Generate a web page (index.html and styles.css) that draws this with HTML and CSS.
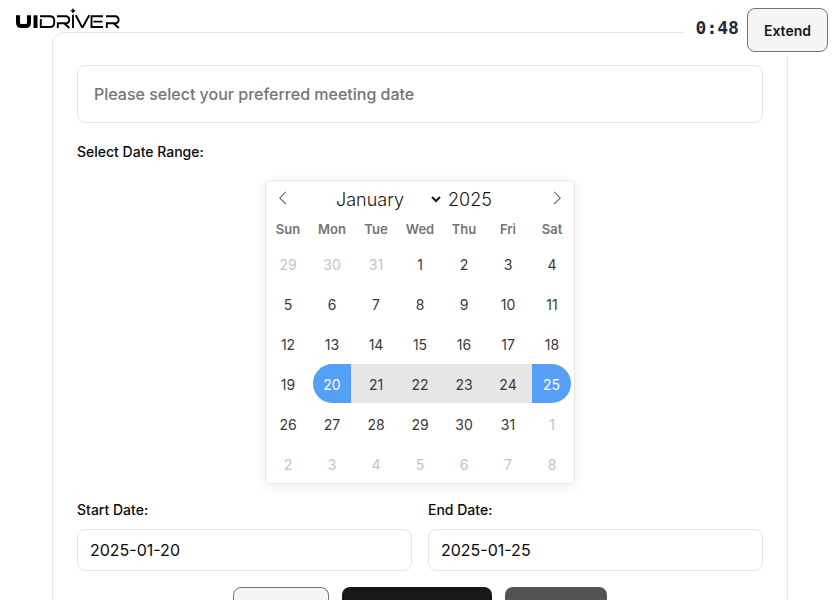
FILE: index.html
```html
<!DOCTYPE html>
<html lang="en">
<head>
  <meta charset="UTF-8">
  <meta name="viewport" content="width=device-width, initial-scale=1.0">
  <title>UI Driver</title>
  <link rel="stylesheet" href="styles.css">
</head>
<body>

  <a class="logo" href="#" aria-label="UI Driver">
    <svg width="104" height="22" viewBox="0 0 104 22" fill="none" stroke="#000" aria-hidden="true">
      <path d="M2 7.300v7.200q0 3.500 3.500 3.500h4q3.500 0 3.500-3.500v-7.200" stroke-width="4"/>
      <path d="M19.500 7.300v12.700" stroke-width="4"/>
      <g stroke-width="1.900">
        <path d="M24.800 11v8h9q4.400 0 4.400-4v-2.600q0-4.200-4.400-4.200h-9.800"/>
        <path d="M41.800 20v-4.800h8q3.400 0 3.400-3.500t-3.400-3.500h-8.800M48.500 15.500l4.800 4.500"/>
        <path d="M57 6.800v13.200"/>
        <path d="M59.800 7.300l6.200 11.700h.8l6.400-11.700"/>
        <path d="M87 8.200h-11.500v10.800h11.500M77.500 13.600h9"/>
        <path d="M90.800 20v-4.800h8.200q3.600 0 3.600-3.500t-3.600-3.500h-9M97.800 15.500l5 4.500"/>
      </g>
      <path d="M57 0l1 1.900 1.900.9-1.900.9-1 1.900-1-1.900-1.900-.9 1.900-.9z" fill="#000" stroke="none"/>
    </svg>
  </a>

  <div class="timer">
    <span class="timer-value">0:48</span>
    <button type="button" class="btn btn-light">Extend</button>
  </div>

  <main class="card">
    <input class="prompt" type="text" placeholder="Please select your preferred meeting date" aria-label="Request">

    <h2 class="label" id="range-label">Select Date Range:</h2>

    <section class="calendar" aria-labelledby="range-label">
      <div class="calendar-header">
        <button type="button" class="nav" aria-label="Previous month">
          <svg width="14" height="14" viewBox="0 0 17 17"><path d="M5.207 8.471l7.146 7.147-0.707 0.707-7.853-7.854 7.854-7.853 0.707 0.707-7.147 7.146z"/></svg>
        </button>
        <div class="current-month">
          <select class="month" aria-label="Month">
            <option selected>January</option>
            <option>February</option>
            <option>March</option>
            <option>April</option>
            <option>May</option>
            <option>June</option>
            <option>July</option>
            <option>August</option>
            <option>September</option>
            <option>October</option>
            <option>November</option>
            <option>December</option>
          </select>
          <input class="year" type="number" value="2025" aria-label="Year">
        </div>
        <button type="button" class="nav" aria-label="Next month">
          <svg width="14" height="14" viewBox="0 0 17 17"><path d="M13.207 8.472l-7.854 7.854-0.707-0.707 7.146-7.146-7.146-7.148 0.707-0.707 7.854 7.854z"/></svg>
        </button>
      </div>
      <table class="days">
        <thead>
          <tr><th>Sun</th><th>Mon</th><th>Tue</th><th>Wed</th><th>Thu</th><th>Fri</th><th>Sat</th></tr>
        </thead>
        <tbody>
          <tr>
            <td><button type="button" class="day other">29</button></td>
            <td><button type="button" class="day other">30</button></td>
            <td><button type="button" class="day other">31</button></td>
            <td><button type="button" class="day">1</button></td>
            <td><button type="button" class="day">2</button></td>
            <td><button type="button" class="day">3</button></td>
            <td><button type="button" class="day">4</button></td>
          </tr>
          <tr>
            <td><button type="button" class="day">5</button></td>
            <td><button type="button" class="day">6</button></td>
            <td><button type="button" class="day">7</button></td>
            <td><button type="button" class="day">8</button></td>
            <td><button type="button" class="day">9</button></td>
            <td><button type="button" class="day">10</button></td>
            <td><button type="button" class="day">11</button></td>
          </tr>
          <tr>
            <td><button type="button" class="day">12</button></td>
            <td><button type="button" class="day">13</button></td>
            <td><button type="button" class="day">14</button></td>
            <td><button type="button" class="day">15</button></td>
            <td><button type="button" class="day">16</button></td>
            <td><button type="button" class="day">17</button></td>
            <td><button type="button" class="day">18</button></td>
          </tr>
          <tr>
            <td><button type="button" class="day">19</button></td>
            <td><button type="button" class="day range-start">20</button></td>
            <td><button type="button" class="day in-range">21</button></td>
            <td><button type="button" class="day in-range">22</button></td>
            <td><button type="button" class="day in-range">23</button></td>
            <td><button type="button" class="day in-range">24</button></td>
            <td><button type="button" class="day range-end">25</button></td>
          </tr>
          <tr>
            <td><button type="button" class="day">26</button></td>
            <td><button type="button" class="day">27</button></td>
            <td><button type="button" class="day">28</button></td>
            <td><button type="button" class="day">29</button></td>
            <td><button type="button" class="day">30</button></td>
            <td><button type="button" class="day">31</button></td>
            <td><button type="button" class="day other">1</button></td>
          </tr>
          <tr>
            <td><button type="button" class="day other">2</button></td>
            <td><button type="button" class="day other">3</button></td>
            <td><button type="button" class="day other">4</button></td>
            <td><button type="button" class="day other">5</button></td>
            <td><button type="button" class="day other">6</button></td>
            <td><button type="button" class="day other">7</button></td>
            <td><button type="button" class="day other">8</button></td>
          </tr>
        </tbody>
      </table>
    </section>

    <div class="dates">
      <div class="field">
        <label class="label" for="start">Start Date:</label>
        <input class="date-input" type="text" id="start" value="2025-01-20">
      </div>
      <div class="field">
        <label class="label" for="end">End Date:</label>
        <input class="date-input" type="text" id="end" value="2025-01-25">
      </div>
    </div>

    <div class="actions">
      <button type="button" class="btn btn-light" aria-label="Previous"></button>
      <button type="button" class="btn btn-dark" aria-label="Confirm"></button>
      <button type="button" class="btn btn-gray" aria-label="Reset"></button>
    </div>
  </main>

</body>
</html>
```

FILE: styles.css
```css
* {
  box-sizing: border-box;
}
body {
  margin: 0;
  padding: 32px 16px;
  background: #fff;
  color: #0a0a0a;
  font-family: Inter, sans-serif;
  font-size: 14px;
  line-height: 20px;
}
button, input, select {
  font-family: inherit;
  color: inherit;
  margin: 0;
}

/* overlays */
.logo {
  position: fixed;
  top: 8px;
  left: 16px;
}
.logo svg {
  display: block;
}
.timer {
  position: fixed;
  top: 0;
  right: 0;
  z-index: 10;
  display: flex;
  align-items: center;
  gap: 8px;
  padding: 8px 12px 4px;
  background: #fff;
}
.timer-value {
  font-family: "DejaVu Sans Mono", monospace;
  font-size: 18px;
  font-weight: 700;
  color: #1f2937;
  padding-bottom: 4px;
}

.card {
  max-width: 736px;
  margin: 0 auto;
  padding: 32px 24px;
  border: 1px solid #e5e5e5;
  border-radius: 12px;
}
.prompt {
  display: block;
  width: 100%;
  height: 58px;
  padding: 0 16px;
  border: 1px solid #e5e5e5;
  border-radius: 8px;
  background: #fff;
  font-size: 16px;
  font-weight: 500;
}
.prompt::placeholder {
  color: #757575;
}
.label {
  display: block;
  margin: 0;
  font-size: 14px;
  font-weight: 500;
}
h2.label {
  margin: 19px 0 18px;
}

/* calendar */
.calendar {
  width: 310px;
  margin: 0 auto 16px;
  border: 1px solid #e5e5e5;
  border-radius: 6px;
  box-shadow: 0 3px 13px rgba(0, 0, 0, 0.08);
}
.calendar-header {
  display: flex;
  align-items: center;
  justify-content: space-between;
  height: 34px;
}
.nav {
  display: flex;
  padding: 10px;
  border: none;
  background: none;
}
.nav svg {
  fill: #3c3f40;
}
.current-month {
  display: flex;
  align-items: center;
  gap: 4px;
  padding-top: 2px;
}
.month, .year {
  border: none;
  background: none;
  font-size: 18px;
  font-weight: 300;
  color: #171717;
  padding: 0;
}
.year {
  width: 60px;
  appearance: textfield;
}
.days {
  width: 100%;
  border-collapse: collapse;
  table-layout: fixed;
}
.days th {
  height: 28px;
  padding: 0 0 1px;
  font-size: 13px;
  font-weight: 600;
  color: #757575;
}
.days td {
  height: 40px;
  padding: 1px 0 0;
}
.day {
  display: block;
  width: 100%;
  height: 39px;
  padding: 2px 0 0;
  border: none;
  background: none;
  font-size: 14px;
  color: #393939;
}
.other {
  color: #c4c4c4;
}
.in-range {
  background: #e6e6e6;
}
.range-start, .range-end {
  width: 38px;
  margin: 0 3px;
  background: #569ff7;
  color: #fff;
}
.range-start {
  border-radius: 50px 0 0 50px;
  box-shadow: 3px 0 0 #e6e6e6;
}
.range-end {
  width: 39px;
  margin-left: 2px;
  border-radius: 0 50px 50px 0;
  box-shadow: -2px 0 0 #e6e6e6;
}

.dates {
  display: grid;
  grid-template-columns: 1fr 1fr;
  gap: 16px;
}
.field {
  display: grid;
  gap: 9px;
}
.date-input {
  width: 100%;
  height: 42px;
  padding: 0 12px;
  border: 1px solid #e5e5e5;
  border-radius: 8px;
  background: #fff;
  font-size: 16px;
}

.actions {
  display: flex;
  justify-content: center;
  gap: 13px;
  margin-top: 16px;
}
.btn {
  height: 44px;
  padding: 0 16px;
  border: 1px solid transparent;
  border-radius: 8px;
  font-size: 14px;
  font-weight: 600;
  cursor: pointer;
}
.btn-light {
  background: #f5f5f5;
  border-color: #737373;
  color: #171717;
}
.btn-dark {
  background: #171717;
  color: #fff;
}
.btn-gray {
  background: #525252;
  color: #fff;
}
.actions .btn {
  min-width: 96px;
}
.actions .btn-dark {
  min-width: 150px;
}
.actions .btn-gray {
  min-width: 102px;
}
```
